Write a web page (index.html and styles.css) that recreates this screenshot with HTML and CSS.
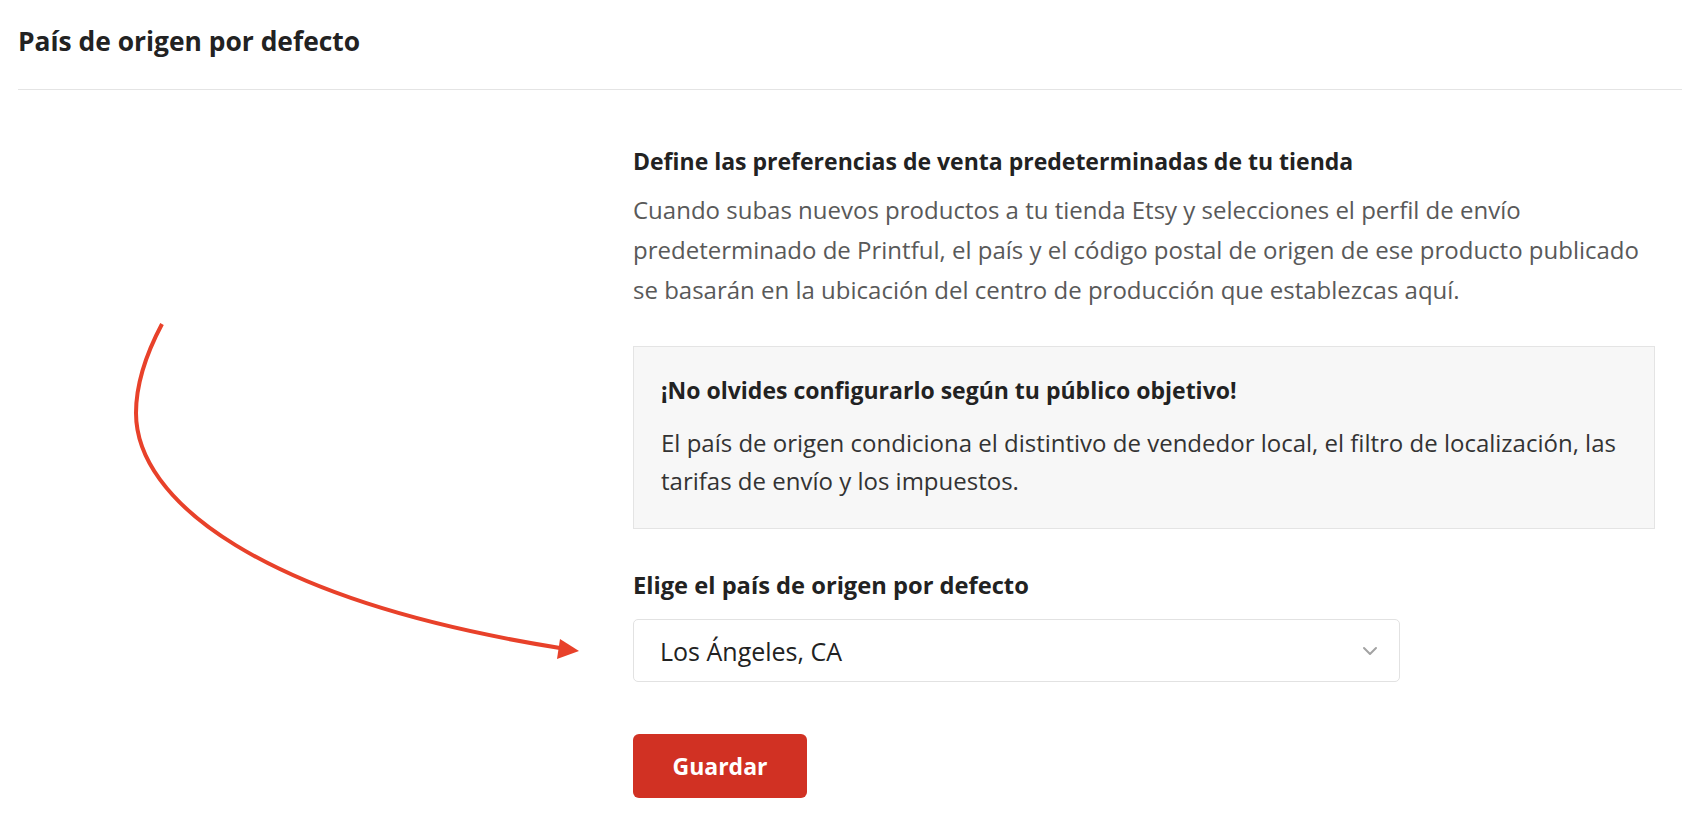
FILE: index.html
```html
<!DOCTYPE html>
<html lang="es">
  <head>
    <meta charset="UTF-8" />
    <meta name="viewport" content="width=device-width, initial-scale=1.0" />
    <title>País de origen por defecto</title>
    <link rel="stylesheet" href="styles.css">
  </head>
  <body>
    <div id="page">
      <div class="header">
        <h1 class="title">País de origen por defecto</h1>
      </div>
      <div class="content">
        <h2 class="heading">Define las preferencias de venta predeterminadas de tu tienda</h2>
        <p class="desc">Cuando subas nuevos productos a tu tienda Etsy y selecciones el perfil de envío predeterminado de Printful, el país y el código postal de origen de ese producto publicado se basarán en la ubicación del centro de producción que establezcas aquí.</p>
        <div class="notice">
          <h3 class="notice-title">¡No olvides configurarlo según tu público objetivo!</h3>
          <p class="notice-text">El país de origen condiciona el distintivo de vendedor local, el filtro de localización, las tarifas de envío y los impuestos.</p>
        </div>
        <label class="field" for="origin">Elige el país de origen por defecto</label>
        <div class="select-box">
          <select id="origin" name="origin">
            <option>Los Ángeles, CA</option>
          </select>
          <svg class="chevron" width="16" height="10" viewBox="0 0 16 10">
            <polyline points="2,2 8,8 14,2" fill="none" stroke="#a3a3a3" stroke-width="2" stroke-linecap="round" stroke-linejoin="round" />
          </svg>
        </div>
        <button type="submit" class="save">Guardar</button>
      </div>
      <!-- flecha de anotación -->
      <svg class="arrow" width="600" height="400" viewBox="100 300 600 400">
        <path d="M162,324 C145,356 136,385 136,413 C136,500 260,600 560,648" fill="none" stroke="#e8412a" stroke-width="4" />
        <polygon points="579,651 560,639 557,659" fill="#e8412a" />
      </svg>
    </div>
  </body>
</html>
```

FILE: styles.css
```css
* {
  padding: 0;
  margin: 0;
  box-sizing: border-box;
}
body {
  background: #fff;
  font-family: "Open Sans", "Liberation Sans", sans-serif;
  color: #222;
}
#page {
  position: relative;
  min-height: 834px;
}
.header {
  margin-left: 18px;
  padding: 26px 0 33px;
  border-bottom: 1px solid #e4e4e4;
}
.title {
  font-size: 26.4px;
  line-height: 30px;
  font-weight: bold;
  color: #222;
}
.content {
  margin-left: 633px;
  width: 1022px;
  padding-top: 56px;
}
.heading {
  font-size: 23px;
  line-height: 30px;
  font-weight: bold;
  color: #222;
}
.desc {
  margin-top: 14px;
  font-size: 24px;
  line-height: 40px;
  color: #595959;
}
.notice {
  margin-top: 36px;
  background: #f7f7f7;
  border: 1px solid #e4e4e4;
  padding: 28px 12px 28px 27px;
}
.notice-title {
  font-size: 23px;
  line-height: 30px;
  font-weight: bold;
  color: #222;
}
.notice-text {
  margin-top: 19px;
  font-size: 24px;
  line-height: 38px;
  color: #333;
}
.field {
  display: block;
  margin-top: 41px;
  font-size: 23.7px;
  line-height: 30px;
  font-weight: bold;
  color: #222;
}
.select-box {
  position: relative;
  margin-top: 19px;
  width: 767px;
  height: 63px;
}
.select-box select {
  appearance: none;
  width: 100%;
  height: 100%;
  border: 1px solid #e2e2e2;
  border-radius: 5px;
  background: #fff;
  padding: 0 60px 0 26px;
  font-family: "Open Sans", "Liberation Sans", sans-serif;
  font-size: 25px;
  color: #222;
}
.chevron {
  position: absolute;
  right: 22px;
  top: 27px;
  pointer-events: none;
}
.save {
  display: block;
  margin-top: 52px;
  width: 174px;
  height: 64px;
  border: none;
  border-radius: 6px;
  background: #d13123;
  color: #fff;
  font-family: "Open Sans", "Liberation Sans", sans-serif;
  font-size: 23px;
  font-weight: bold;
}
.arrow {
  position: absolute;
  left: 100px;
  top: 300px;
  pointer-events: none;
}
```
